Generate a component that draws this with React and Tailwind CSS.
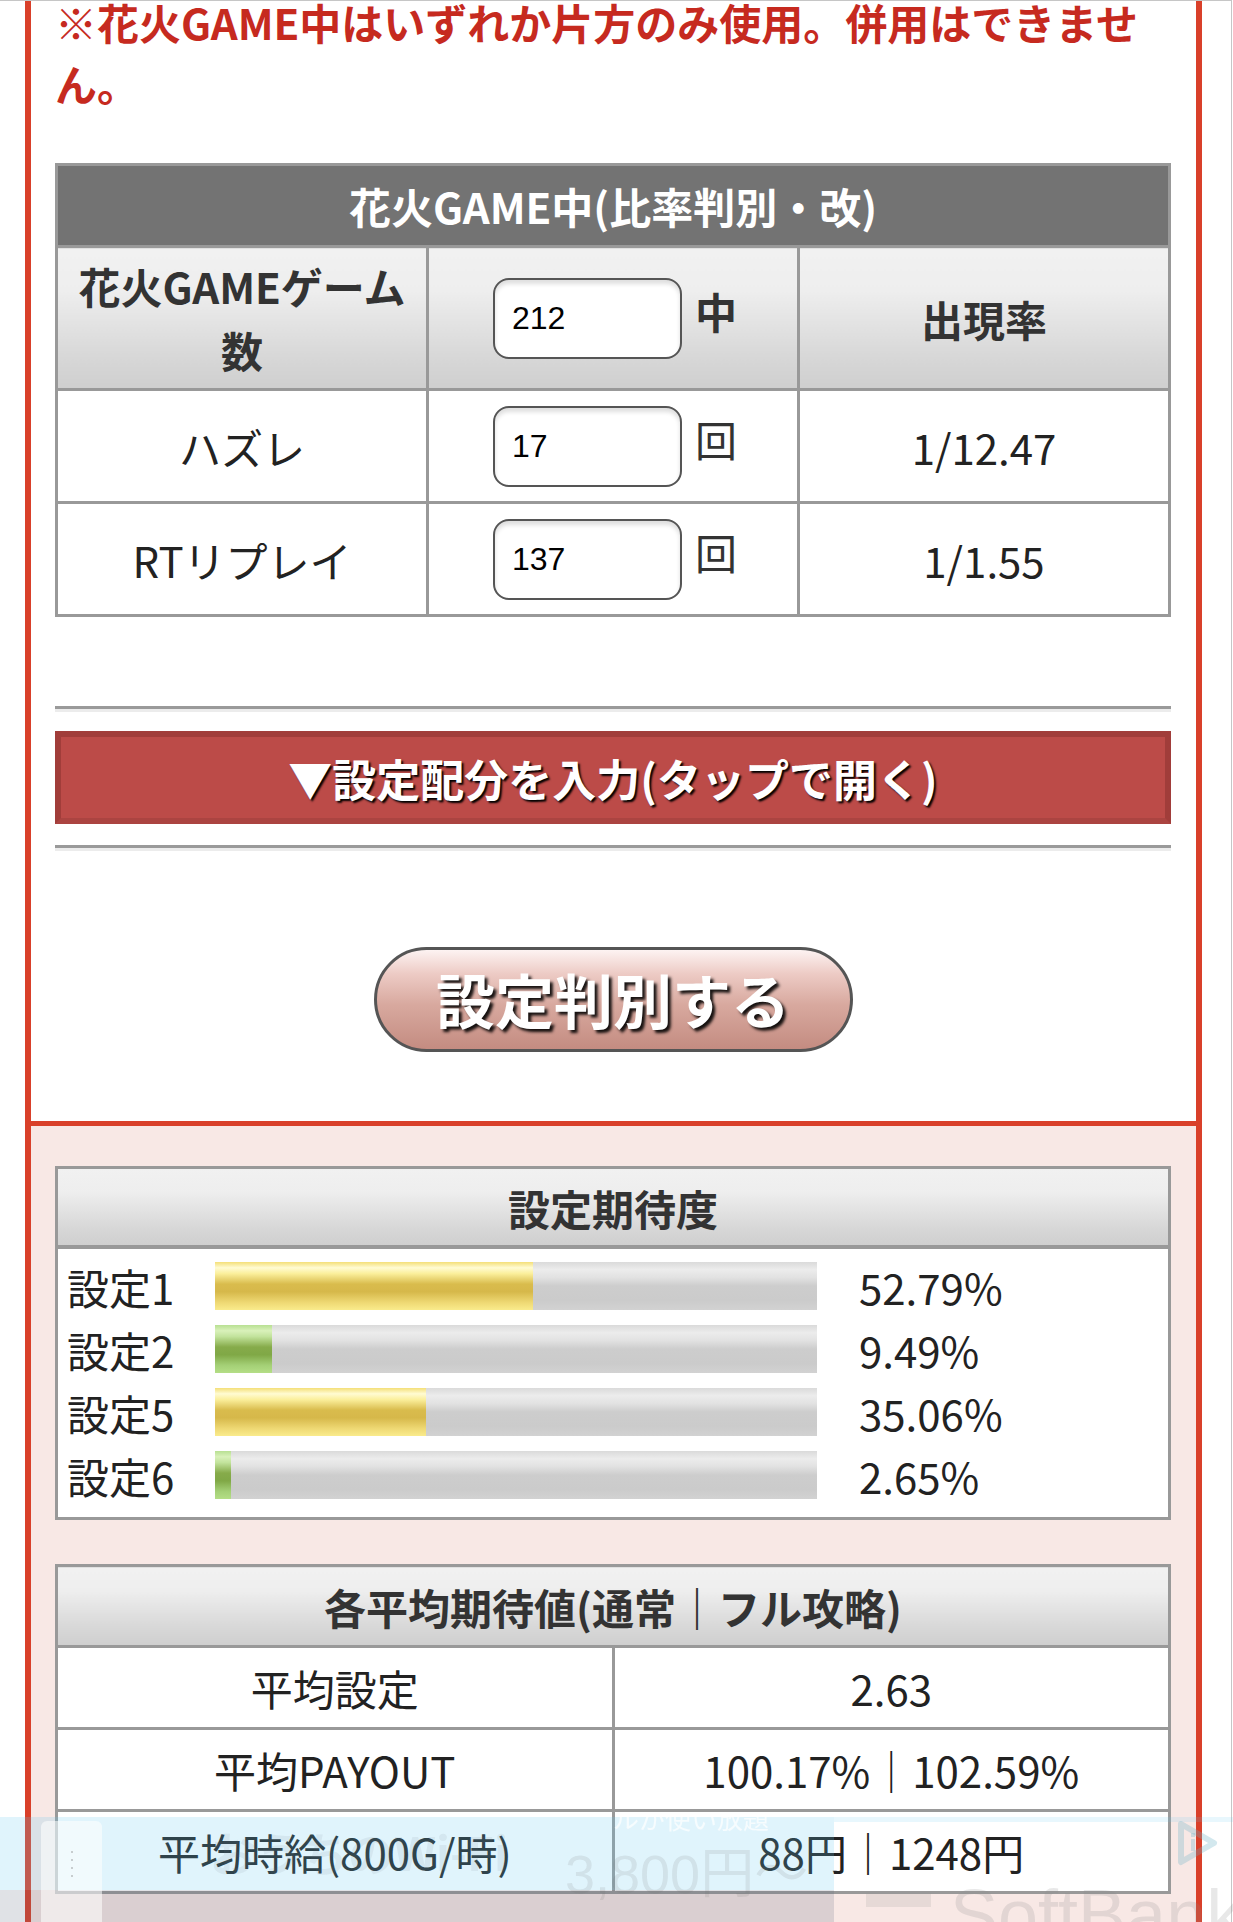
import React from "react";

/*
  Setting-judge page (花火 GAME中 比率判別)
  - input table, collapsible distribution bar, judge button
  - result: setting probabilities + average expected values
*/

const RATE_ROWS = [
  { label: "ハズレ", count: 17, unit: "回", rate: "1/12.47" },
  { label: "RTリプレイ", count: 137, unit: "回", rate: "1/1.55" },
];

const TRACK = "bg-[linear-gradient(180deg,#dadada_0%,#ececec_16%,#e2e2e2_32%,#cdcdcd_50%,#cbcbcb_80%,#d2d2d2_100%)]";
const YELLOW = "bg-[linear-gradient(180deg,#f4df78_0%,#fffbd2_12%,#fbef9c_24%,#d9bc4d_46%,#d6b84a_62%,#eed873_84%,#faeb8c_100%)]";
const GREEN = "bg-[linear-gradient(180deg,#b8e092_0%,#d9f1ba_12%,#c2e39c_24%,#86ab4a_46%,#80a846_62%,#a4d076_84%,#b4de86_100%)]";

const SETTINGS = [
  { label: "設定1", pct: 52.79, fill: YELLOW },
  { label: "設定2", pct: 9.49, fill: GREEN },
  { label: "設定5", pct: 35.06, fill: YELLOW },
  { label: "設定6", pct: 2.65, fill: GREEN },
];

const AVERAGES = [
  { label: "平均設定", value: "2.63" },
  { label: "平均PAYOUT", value: "100.17%｜102.59%" },
  { label: "平均時給(800G/時)", value: "88円｜1248円" },
];

const HEAD_GRAD = "bg-[linear-gradient(180deg,#f1f1f1_0%,#eeeeee_30%,#d7d7d7_78%,#cfcfcf_100%)]";

const CountInput = ({ value }) => (
  <input
    readOnly
    value={value}
    className="w-[189px] h-[81px] border-2 border-[#555] rounded-[16px] bg-white pl-[17px] text-[32px] font-normal text-black font-['Liberation_Sans',sans-serif] shadow-[inset_0_4px_4px_rgba(0,0,0,0.13)] outline-none"
  />
);

const Divider = () => (
  <div className="border-t-[3px] border-b-[3px] border-t-[#9a9a9a] border-b-[#ececec]"></div>
);

const AdOverlay = () => (
  <div className="fixed bottom-0 left-0 w-[1233px] h-[105px] overflow-hidden pointer-events-none flex">
    {/* left tinted block */}
    <div className="w-[834px] flex flex-col">
      <div className="h-[73px] bg-[rgba(100,200,240,0.2)]"></div>
      <div className="flex-1 bg-[rgba(90,100,120,0.19)]"></div>
    </div>
    <div className="flex-1 flex flex-col">
      <div className="h-[5px] bg-[rgba(100,200,240,0.15)]"></div>
    </div>

    {/* faint ad contents */}
    <div className="absolute left-[41px] top-[4px] w-[61px] h-[110px] rounded-md bg-[rgba(255,255,255,0.55)] flex flex-col items-center pt-[30px] gap-[6px]">
      <span className="w-[2px] h-[2px] bg-[rgba(120,120,120,0.35)]"></span>
      <span className="w-[2px] h-[2px] bg-[rgba(120,120,120,0.35)]"></span>
      <span className="w-[2px] h-[2px] bg-[rgba(120,120,120,0.35)]"></span>
      <span className="w-[2px] h-[2px] bg-[rgba(120,120,120,0.35)]"></span>
    </div>
    <span className="absolute left-[210px] top-[4px] text-[46px] font-bold leading-[60px] text-[rgba(110,120,130,0.1)] font-['Noto_Sans_CJK_JP',sans-serif]">
      おうちのWi-Fi
    </span>
    <span className="absolute left-[565px] top-[22px] text-[54px] leading-[70px] text-[rgba(110,110,110,0.14)] font-['Liberation_Sans','Noto_Sans_CJK_JP',sans-serif]">
      3,800円〜
    </span>
    <span className="absolute left-[613px] top-[-16px] text-[26px] leading-[34px] text-[rgba(255,255,255,0.7)] font-['Noto_Sans_CJK_JP',sans-serif]">
      ルが使い放題
    </span>
    <span className="absolute left-[866px] top-[75px] w-[65px] h-[15px] bg-[rgba(150,150,150,0.18)]"></span>
    <span className="absolute left-[950px] top-[58px] text-[72px] leading-[80px] text-[rgba(140,140,140,0.2)] font-['Liberation_Sans',sans-serif]">
      SoftBank
    </span>
    <svg className="absolute left-[1176px] top-[3px]" width="44" height="46" viewBox="0 0 44 46">
      <path d="M5 4 L38 23 L5 42 Z" fill="none" stroke="rgba(110,180,200,0.3)" strokeWidth="6" strokeLinejoin="round" />
      <rect x="15" y="19" width="4" height="12" fill="rgba(110,180,200,0.3)" />
      <rect x="15" y="13" width="4" height="4" fill="rgba(110,180,200,0.3)" />
    </svg>
  </div>
);

export default function App() {
  return (
    <div className="w-[1232px] min-h-[1922px] bg-white border-t border-r border-[#c6c6c6] font-['Noto_Sans_CJK_JP','Liberation_Sans',sans-serif] overflow-hidden">
      <div className="ml-[25px] w-[1177px] min-h-[1921px] border-x-[6px] border-[#d9402a] flex flex-col">

        {/* ===== INPUT SECTION ===== */}
        <section className="pl-[24px] pr-[25px] pb-[69px] bg-white">

          <p className="mt-[-10px] text-[42px] leading-[61px] font-bold text-[#c62a1f]">
            ※花火GAME中はいずれか片方のみ使用。併用はできません。
          </p>

          <table className="mt-[50px] w-full table-fixed border-collapse border-[3px] border-[#999]">
            <thead>
              <tr>
                <th colSpan={3} className="h-[82px] p-0 bg-[#737373] border-[3px] border-[#999] text-white text-[42px] font-bold">
                  花火GAME中(比率判別・改)
                </th>
              </tr>
            </thead>
            <tbody>
              <tr>
                <th className={`h-[143px] px-[8px] py-0 border-[3px] border-[#999] ${HEAD_GRAD} text-[42px] leading-[64px] font-bold text-[#333]`}>
                  花火GAMEゲーム<br />数
                </th>
                <th className={`h-[143px] p-0 border-[3px] border-[#999] ${HEAD_GRAD}`}>
                  <div className="flex items-baseline justify-center pl-[4px]">
                    <CountInput value="212" />
                    <span className="ml-[13px] text-[42px] font-bold text-[#333]">中</span>
                  </div>
                </th>
                <th className={`h-[143px] p-0 border-[3px] border-[#999] ${HEAD_GRAD} text-[42px] font-bold text-[#333]`}>
                  出現率
                </th>
              </tr>
              {RATE_ROWS.map((row) => (
                <tr key={row.label}>
                  <td className="h-[113px] p-0 border-[3px] border-[#999] text-center text-[42px] text-[#222]">
                    {row.label}
                  </td>
                  <td className="h-[113px] p-0 border-[3px] border-[#999]">
                    <div className="flex items-baseline justify-center pl-[4px]">
                      <CountInput value={row.count} />
                      <span className="ml-[13px] text-[42px] text-[#333]">{row.unit}</span>
                    </div>
                  </td>
                  <td className="h-[113px] p-0 border-[3px] border-[#999] text-center text-[42px] text-[#222]">
                    {row.rate}
                  </td>
                </tr>
              ))}
            </tbody>
          </table>

          <div className="mt-[89px]">
            <Divider />
          </div>

          {/* collapsible distribution input */}
          <div className="mt-[19px] h-[93px] border-[6px] border-[#a13d3a] border-b-[#ab4441] bg-[#bc4b48] flex items-center justify-center">
            <span className="text-[44px] font-bold text-white [text-shadow:2px_2px_2px_#000]">
              ▼設定配分を入力(タップで開く)
            </span>
          </div>

          <div className="mt-[21px]">
            <Divider />
          </div>

          {/* judge button */}
          <div className="mt-[96px] flex justify-center">
            <button className="w-[479px] h-[105px] rounded-full border-[3px] border-[#555] bg-[linear-gradient(180deg,#fdf3f2_0%,#edcbc5_24%,#d8a99f_55%,#c48c81_100%)] flex items-center justify-center">
              <span className="text-[59px] font-bold text-white [text-shadow:3px_3px_3px_rgba(0,0,0,0.9)]">
                設定判別する
              </span>
            </button>
          </div>
        </section>

        <div className="h-[5px] bg-[#d9402a]"></div>

        {/* ===== RESULT SECTION ===== */}
        <section className="flex-1 bg-[#f8e8e5] pl-[24px] pr-[25px] pt-[40px] pb-[40px]">

          {/* setting probability */}
          <div className="border-[3px] border-[#999] bg-white">
            <div className={`h-[80px] border-b-[4px] border-[#999] ${HEAD_GRAD} flex items-center justify-center`}>
              <span className="text-[42px] font-bold text-[#333]">設定期待度</span>
            </div>
            <div className="pt-[13px] pb-[18px] flex flex-col gap-[15px]">
              {SETTINGS.map((s) => (
                <div key={s.label} className="h-[48px] flex items-center">
                  <span className="w-[157px] pl-[9px] text-[42px] text-[#222]">{s.label}</span>
                  <div className={`w-[602px] h-[48px] ${TRACK}`}>
                    <div className={`h-full ${s.fill}`} style={{ width: `${s.pct}%` }}></div>
                  </div>
                  <span className="pl-[42px] text-[42px] text-[#222]">{s.pct.toFixed(2)}%</span>
                </div>
              ))}
            </div>
          </div>

          {/* average expected values */}
          <table className="mt-[44px] w-full table-fixed border-collapse border-[3px] border-[#999] bg-white">
            <thead>
              <tr>
                <th colSpan={2} className={`h-[81px] p-0 border-[3px] border-[#999] ${HEAD_GRAD} text-[42px] font-bold text-[#333]`}>
                  各平均期待値(通常｜フル攻略)
                </th>
              </tr>
            </thead>
            <tbody>
              {AVERAGES.map((a) => (
                <tr key={a.label}>
                  <td className="h-[82px] p-0 border-[3px] border-[#999] text-center text-[42px] text-[#222]">{a.label}</td>
                  <td className="h-[82px] p-0 border-[3px] border-[#999] text-center text-[42px] text-[#222]">{a.value}</td>
                </tr>
              ))}
            </tbody>
          </table>
        </section>
      </div>

      <AdOverlay />
    </div>
  );
}
